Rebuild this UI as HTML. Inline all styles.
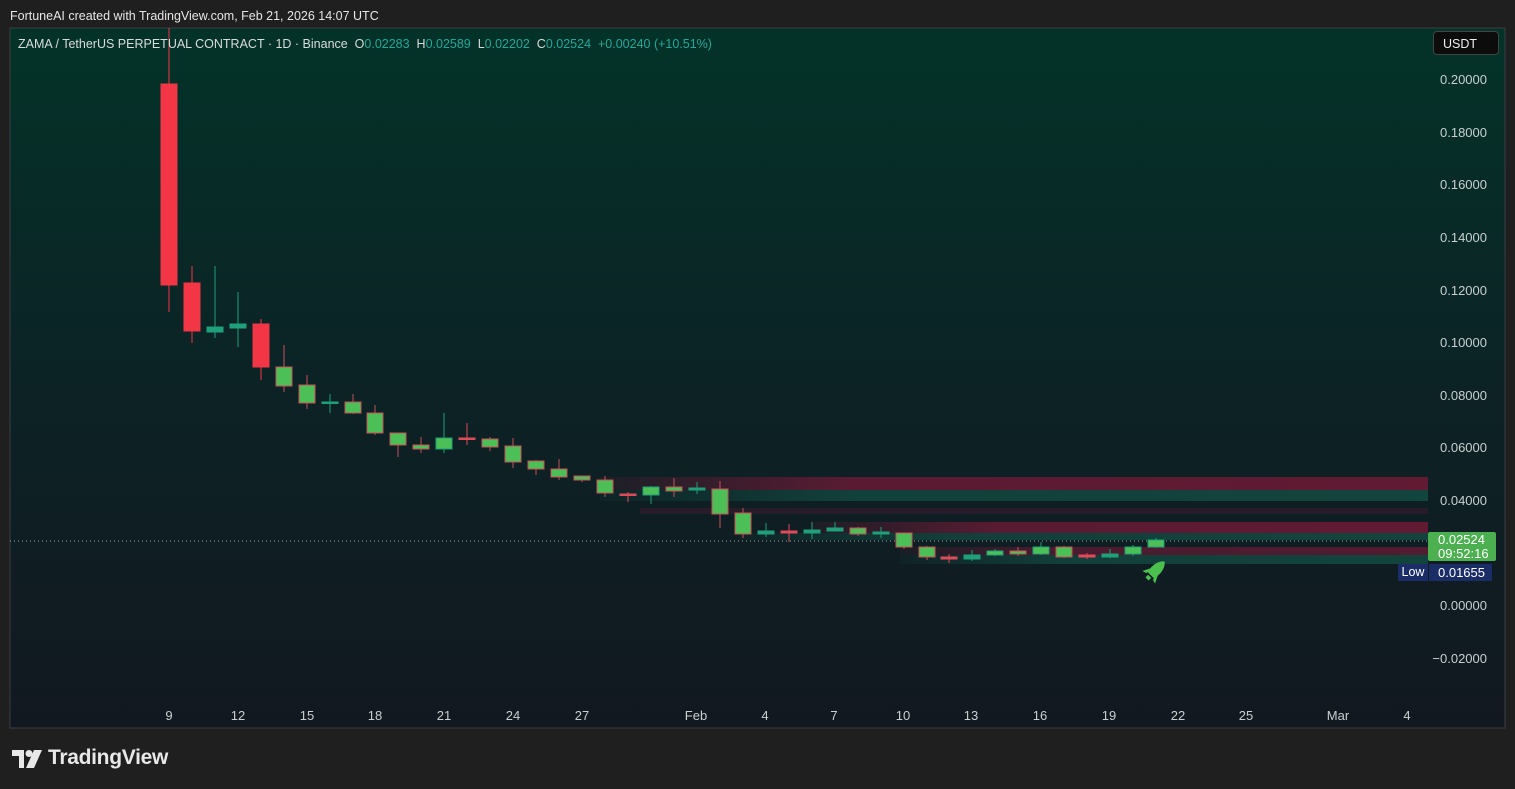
<!DOCTYPE html>
<html><head><meta charset="utf-8"><style>
html,body{margin:0;padding:0;background:#1f1f1f;width:1515px;height:789px;overflow:hidden;font-family:"Liberation Sans",sans-serif}
.t{position:absolute;white-space:nowrap}
</style></head><body>
<div class="t" style="left:10px;top:9px;font-size:12.5px;color:#e6e6e6">FortuneAI created with TradingView.com, Feb 21, 2026 14:07 UTC</div>
<svg width="1515" height="789" style="position:absolute;left:0;top:0" xmlns="http://www.w3.org/2000/svg">
<defs>
<linearGradient id="bg" x1="0" y1="0" x2="0" y2="1">
<stop offset="0" stop-color="#033328"/>
<stop offset="0.45" stop-color="#0b2426"/>
<stop offset="1" stop-color="#121820"/>
</linearGradient>
<linearGradient id="rb" x1="0" y1="0" x2="1" y2="0">
<stop offset="0" stop-color="#6b1a35" stop-opacity="0.15"/>
<stop offset="0.3" stop-color="#6b1a35" stop-opacity="0.8"/>
<stop offset="1" stop-color="#6b1a35" stop-opacity="0.9"/>
</linearGradient>
<linearGradient id="tb" x1="0" y1="0" x2="1" y2="0">
<stop offset="0" stop-color="#145548" stop-opacity="0.1"/>
<stop offset="0.3" stop-color="#145548" stop-opacity="0.6"/>
<stop offset="1" stop-color="#145548" stop-opacity="0.7"/>
</linearGradient>
</defs>
<rect x="10" y="28" width="1495" height="700" fill="url(#bg)" stroke="#3a3d42" stroke-width="1"/>
<rect x="600" y="477" width="828" height="13" fill="url(#rb)"/>
<rect x="600" y="490" width="828" height="11" fill="url(#tb)"/>
<rect x="640" y="508" width="788" height="6" fill="#3a1a2c" opacity="0.6"/>
<rect x="810" y="522" width="618" height="11" fill="url(#rb)"/>
<rect x="740" y="533" width="688" height="7" fill="url(#tb)"/>
<rect x="900" y="547" width="528" height="8" fill="url(#rb)" opacity="0.8"/>
<rect x="900" y="555" width="528" height="9" fill="url(#tb)"/>
<line x1="10" y1="541" x2="1428" y2="541" stroke="#9aa" stroke-width="1" stroke-dasharray="1,3"/>
<g id="c"></g>
<g transform="translate(1155,571) rotate(45) scale(1.5)" fill="#4cc04f">
<path d="M0,-9 C4,-6 4,0 3,4 L-3,4 C-4,0 -4,-6 0,-9Z"/>
<path d="M-3,0 L-6,6 L-3,5Z M3,0 L6,6 L3,5Z"/>
<rect x="-1.5" y="5" width="3" height="2.5"/>
</g>
</svg>
<div class="t" style="left:18px;top:37px;font-size:12.5px;color:#d8dcdc">ZAMA / TetherUS PERPETUAL CONTRACT · 1D · Binance&nbsp; O<span style="color:#26a69a">0.02283</span>&nbsp; H<span style="color:#26a69a">0.02589</span>&nbsp; L<span style="color:#26a69a">0.02202</span>&nbsp; C<span style="color:#26a69a">0.02524</span>&nbsp; <span style="color:#26a69a">+0.00240 (+10.51%)</span></div>
<div class="t" style="left:1433px;top:31px;width:66px;height:24px;background:#0c0c0c;border:1px solid #444;border-radius:4px;color:#eee;font-size:12.5px;line-height:24px;padding-left:9px;box-sizing:border-box">USDT</div>
<div id="ax"></div>
<div class="t" style="left:1428px;top:532px;width:68px;height:29px;background:#4caf50;border-radius:2px;color:#fff;font-size:13px;line-height:14px;padding:1px 0 0 10px;box-sizing:border-box">0.02524<br>09:52:16</div>
<div class="t" style="left:1398px;top:564px;width:30px;height:17px;background:#1a2d66;color:#fff;font-size:12.5px;line-height:17px;text-align:center">Low</div>
<div class="t" style="left:1429px;top:564px;width:63px;height:17px;background:#1a2d66;color:#fff;font-size:13px;line-height:17px;padding-left:9px;box-sizing:border-box">0.01655</div>
<svg style="position:absolute;left:12px;top:750px" width="30" height="18" viewBox="0 0 30 18"><path d="M0 0h12v18h-5V6H0z" fill="#e8e8e8"/><circle cx="17" cy="3.5" r="3.5" fill="#e8e8e8"/><path d="M22 0h8l-8 18h-8z" fill="#e8e8e8"/></svg>
<div class="t" style="left:48px;top:746px;font-size:21px;font-weight:bold;color:#e8e8e8;letter-spacing:-0.3px">TradingView</div>
<script>
var P=[["0.20000",80],["0.18000",133],["0.16000",185],["0.14000",238],["0.12000",291],["0.10000",343],["0.08000",396],["0.06000",448],["0.04000",501],["0.00000",606],["\u22120.02000",659]];
var h="";P.forEach(function(p){h+='<div class="t" style="right:28px;top:'+(p[1]-8)+'px;font-size:13px;color:#c8d0d0">'+p[0]+'</div>';});
var D=[["9",169],["12",238],["15",307],["18",375],["21",444],["24",513],["27",582],["Feb",696],["4",765],["7",834],["10",903],["13",971],["16",1040],["19",1109],["22",1178],["25",1246],["Mar",1338],["4",1407]];
D.forEach(function(d){h+='<div class="t" style="left:'+(d[1]-20)+'px;width:40px;text-align:center;top:708px;font-size:13px;color:#c8d0d0">'+d[0]+'</div>';});
document.getElementById("ax").innerHTML=h;
var C=[[169,84,285,28,312,"R"],[192,283,331,266,343,"R"],[215,327,332,266,338,"T"],[238,324,328,292,347,"T"],[261,324,367,319,380,"R"],
[284,367,386,345,392,"G"],[307,385,403,375,409,"G"],[330,402,403,394,413,"X2"],[353,402,413,394,414,"G"],[375,413,433,405,435,"G"],[398,433,445,433,457,"G"],[421,445,449,437,453,"G"],[444,438,449,413,453,"GT"],[467,438,439,423,445,"X"],[490,439,447,437,451,"G"],[513,446,462,438,468,"G"],[536,461,469,460,475,"G"],[559,469,477,459,480,"G"],[582,476,480,476,482,"G"],
[605,480,493,476,497,"G"],[628,494,495,492,502,"X"],[651,487,495,486,504,"GT"],[674,487,491,478,497,"G"],[697,488,490,482,494,"T"],[720,489,514,481,528,"G"],[743,513,534,508,538,"G"],[766,531,534,523,537,"T"],[789,531,533,524,542,"X"],[812,530,533,522,539,"T"],[835,528,531,522,531,"T"],[858,528,534,527,536,"G"],[881,532,534,527,538,"T"],[904,533,547,533,549,"G"],[927,547,557,546,560,"G"],[949,557,559,554,563,"X"],[972,555,559,550,561,"T"],[995,551,555,549,556,"GT"],[1018,551,554,547,556,"G"],[1041,547,554,542,555,"GT"],[1064,547,557,546,558,"G"],[1087,555,557,553,559,"X"],[1110,554,557,549,558,"T"],[1133,547,554,545,556,"GT"],[1156,540,547,538,548,"GT"]];
var s="";
C.forEach(function(c){var x=c[0],t=c[5],f,st,w;
if(t=="R"){f="#f23645";st="#f23645";w="#f23645";}
else if(t=="T"){f="#1f9f7a";st="#1f9f7a";w="#1f9f7a";}
else if(t=="X"){f="#e04a5a";st="#e04a5a";w="#e04a5a";}
else if(t=="X2"){f="#1f9f7a";st="#1f9f7a";w="#1f9f7a";}
else if(t=="GT"){f="#4cbf56";st="#1f9f7a";w="#1f9f7a";}
else {f="#4cbf56";st="#c8505a";w="#c8505a";}
s+='<line x1="'+x+'" y1="'+c[3]+'" x2="'+x+'" y2="'+c[4]+'" stroke="'+w+'" stroke-width="1"/>';
var hh=Math.max(c[2]-c[1],1.5);
s+='<rect x="'+(x-8)+'" y="'+c[1]+'" width="16" height="'+hh+'" fill="'+f+'" stroke="'+st+'" stroke-width="1"/>';});
document.getElementById("c").innerHTML=s;
</script>
</body></html>
